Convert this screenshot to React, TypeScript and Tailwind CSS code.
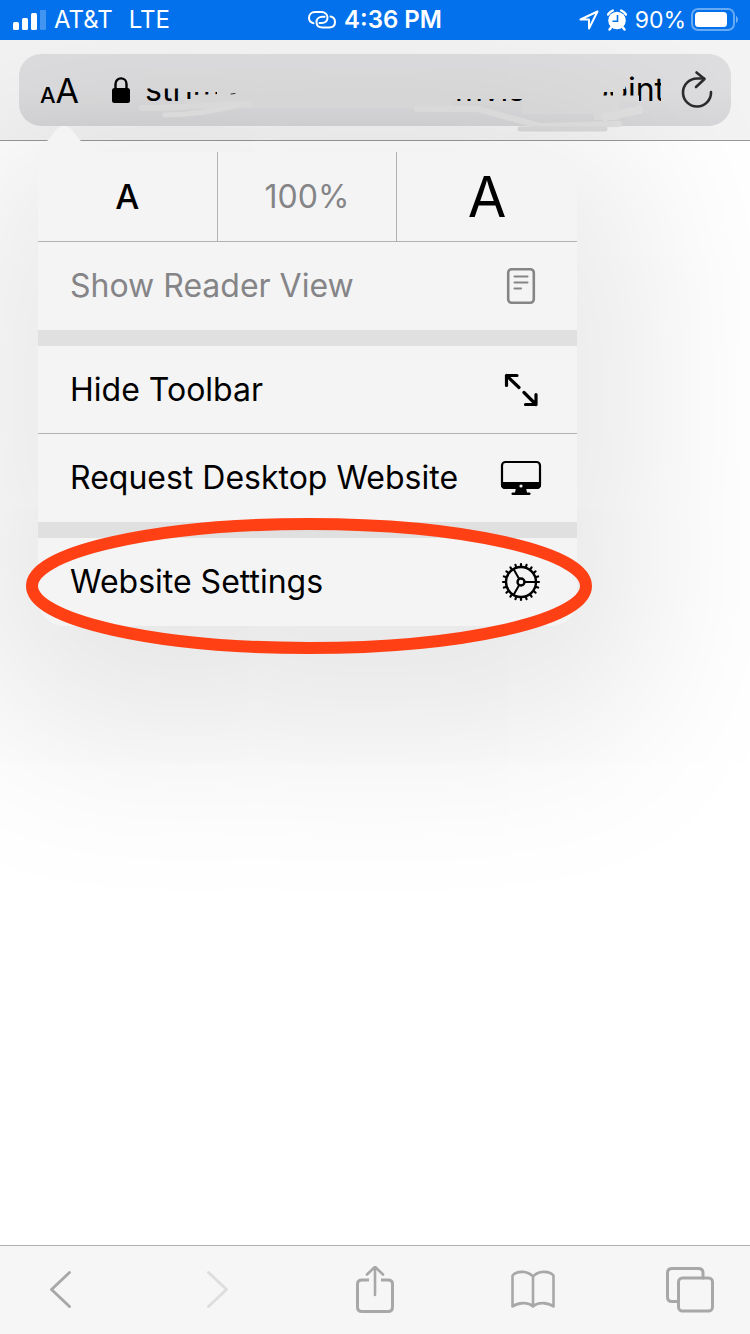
import type { ReactNode } from 'react';

function StatusBar() {
  return (
    <div className="relative z-10 grid h-10 grid-cols-[1fr_auto_1fr] items-center bg-[#0271eb] px-3 text-[24px] leading-10 text-white">
      <div className="flex items-center">
        <svg className="mr-2 h-5 w-[34px]" viewBox="0 0 34 20" fill="currentColor">
          <rect x="1" y="12" width="6" height="8" rx="1.5" />
          <rect x="10" y="8" width="6" height="12" rx="1.5" />
          <rect x="19" y="3" width="6" height="17" rx="1.5" />
          <rect x="28" y="-1" width="6" height="21" rx="1.5" opacity="0.25" />
        </svg>
        <span className="mr-4">AT&amp;T</span>
        <span>LTE</span>
      </div>
      <div className="flex items-center gap-2">
        <svg className="h-5 w-7" viewBox="0 0 28 20" fill="none" stroke="currentColor" strokeWidth="2" strokeLinecap="round">
          <path d="M5.5 13.2C2.500 12.500 1 10 1 7.800C1 4.500 3.500 2 7 2H13.500C17 2 19.500 4.500 19.500 7.500C19.500 11 17 13 13.500 13H11.500" />
          <path d="M22.500 6.500C25.500 7.200 27 9.500 27 12C27 15.500 24.500 17.500 21 17.500H14.500C11 17.500 8.500 15.500 8.500 12C8.500 9 11 6.800 14.500 6.800H16.500" />
        </svg>
        <span className="font-semibold">4:36 PM</span>
      </div>
      <div className="flex items-center justify-end text-[23px]">
        <svg className="mr-2 h-5 w-5" viewBox="0 0 20 20" fill="none" stroke="currentColor" strokeWidth="2" strokeLinejoin="round">
          <path d="M18.500 1.500L1.500 9.500H10V18.500Z" />
        </svg>
        <svg className="mr-2 h-[22px] w-5" viewBox="0 0 20 22">
          <circle cx="10" cy="11.500" r="8.800" fill="currentColor" />
          <path d="M1 5.500A13 13 0 0 1 5.800 1.500M19 5.500A13 13 0 0 0 14.200 1.500M4.500 18L2.500 20.500M15.500 18L17.500 20.500" stroke="currentColor" strokeWidth="2.400" strokeLinecap="round" fill="none" />
          <path d="M10.500 6V12.200H5.500" fill="none" stroke="#0271eb" strokeWidth="1.600" />
        </svg>
        <span className="mr-1">90%</span>
        <svg className="h-6 w-[48px]" viewBox="0 0 48 24">
          <rect x="2" y="1" width="42" height="21" rx="6" fill="none" stroke="#fff" strokeOpacity="0.4" strokeWidth="2" />
          <rect x="5" y="4" width="32" height="15" rx="3.500" fill="#fff" />
          <path d="M46 8C48.500 9 48.500 14 46 15Z" fill="#fff" fillOpacity="0.45" />
        </svg>
      </div>
    </div>
  );
}

// Marker strokes painted over most of the address
function Scribble() {
  return (
    <svg className="pointer-events-none absolute top-0 left-[120px] h-20 w-[530px]" viewBox="0 0 530 80" fill="none" strokeLinecap="round">
      <g fill="#dddddd">
        <path d="M4 14H312V54H78V38H45V34.500H4Z" />
        <path d="M46 45H54V41L80 40V54H46Z" />
        <path d="M300 14H486V35H482V38H460V60H383V45H300Z" />
        <path d="M455 41.500H500V47H480V66H455Z" />
        <path d="M474 34H482V47H474Z" />
      </g>
      <path d="M92 40L96 39.500" stroke="#333" strokeWidth="1" />
      <path d="M2 54C40 54 70 51 110 50" stroke="#e0e0e0" strokeWidth="6" />
      <path d="M26 61C50 61 70 58 96 52" stroke="#e2e2e2" strokeWidth="5" />
      <path d="M278 55H340L400 72L480 70" stroke="#e0e0e0" strokeWidth="6" />
      <path d="M466 63L500 56" stroke="#e0e0e0" strokeWidth="8" />
      <path d="M381 75H466" stroke="#dadada" strokeWidth="5" />
    </svg>
  );
}

function AddressBar() {
  return (
    <div className="border-b border-[#98989a] bg-[#f3f3f3] px-[19px] pt-[14px] pb-[14px]">
      <div className="relative flex h-[72px] items-center rounded-[22px] bg-linear-to-b from-[#dddddf] from-50% to-[#d6d6d8] pr-[18px] pl-[21px]">
        <button type="button" aria-label="Page settings" className="flex items-baseline text-black">
          <span className="text-[22px] font-medium">A</span>
          <span className="text-[34px]">A</span>
        </button>
        <svg className="ml-8 h-7 w-5" viewBox="0 0 20 28">
          <rect x="1" y="12" width="18" height="15" rx="2.500" />
          <path d="M4.500 13V8C4.500 0.500 15.500 0.500 15.500 8V13" fill="none" stroke="#000" strokeWidth="2.400" />
        </svg>
        <button type="button" aria-label="Address" className="ml-[14px] flex h-12 min-w-0 flex-1 items-center overflow-hidden text-[32px]">
          <span>strim</span>
          <span className="ml-auto">mvis</span>
          <span className="-mr-1 ml-16">point</span>
        </button>
        <button type="button" aria-label="Reload" className="ml-5 text-[#2c2c2e]">
          <svg className="h-10 w-8" viewBox="0 0 32 40" fill="none" stroke="currentColor" strokeWidth="2.600" strokeLinecap="round" strokeLinejoin="round">
            <path d="M30 22A14 14 0 1 1 16 8.500H23" />
            <path d="M15.500 2.500L23.500 9L15 17" />
          </svg>
        </button>
        <Scribble />
      </div>
    </div>
  );
}

interface MenuRowProps {
  label: string;
  icon: ReactNode;
  disabled?: boolean;
}

function MenuRow({ label, icon, disabled = false }: MenuRowProps) {
  return (
    <button
      type="button"
      disabled={disabled}
      className="flex h-[88px] w-full items-center justify-between px-8 text-[32px] text-black disabled:text-[#858587]"
    >
      <span>{label}</span>
      {icon}
    </button>
  );
}

const teeth = Array.from({ length: 20 }, (_, i) => i * 18);

const readerIcon = (
  <svg className="h-12 w-12" viewBox="0 0 48 48" fill="none" stroke="currentColor" strokeLinecap="round">
    <rect x="11.200" y="7.200" width="25.600" height="33.600" rx="3.500" strokeWidth="2.600" />
    <path d="M17.500 14.500H30.500M17.500 20.500H30.500M17.500 26.500H24" strokeWidth="2" />
  </svg>
);

const expandIcon = (
  <svg className="h-12 w-12" viewBox="0 0 48 48" fill="none" stroke="currentColor" strokeWidth="3.200" strokeLinecap="round" strokeLinejoin="round">
    <path d="M9.500 19.500V9.500H20M9.500 9.500L22 21.500M39 28.500V38.500H28.500M39 38.500L27 26.500" />
  </svg>
);

const desktopIcon = (
  <svg className="h-12 w-12" viewBox="0 0 48 48">
    <rect x="5" y="8" width="38" height="26" rx="3.500" fill="none" stroke="currentColor" strokeWidth="2.200" />
    <path d="M4 28H44V31C44 33.500 42.500 35 40 35H8C5.500 35 4 33.500 4 31Z" />
    <path d="M19 34H29L30 38.500H32.500C34 38.500 34 41 32.500 41H15.500C14 41 14 38.500 15.500 38.500H18Z" />
    <circle cx="24" cy="32" r="1.600" fill="#f4f4f5" />
  </svg>
);

const gearIcon = (
  <svg className="h-12 w-12" viewBox="0 0 48 48" fill="none" stroke="currentColor" strokeWidth="2.400">
    <circle cx="24" cy="24" r="15" />
    <circle cx="24" cy="24" r="3.500" />
    <path d="M27.500 24H39M22.200 21L16.500 11M22.200 27L16.500 37" strokeWidth="2" />
    {teeth.map((angle) => (
      <path key={angle} d="M40 24H42" strokeWidth="2.200" strokeLinecap="round" transform={`rotate(${angle} 24 24)`} />
    ))}
  </svg>
);

function PageMenu() {
  return (
    <div className="relative mt-[11px] ml-[38px] w-[539px] max-w-[calc(100%-38px)] rounded-[26px] rounded-tl-none bg-[#f4f4f5] shadow-[0_50px_180px_60px_rgba(0,0,0,0.1)]">
      <svg className="absolute -top-[26px] left-0 h-[27px] w-[60px]" viewBox="0 0 60 27" fill="#f4f4f5">
        <path d="M0 27C2 24 5 20 10 14L18 4C22 -1.500 30 -1.500 34 4L42 14C48 22 51 26 60 26V27Z" />
      </svg>
      <div className="grid h-[90px] grid-cols-3 divide-x divide-[#b2b2b4] border-b border-[#b2b2b4]">
        <button type="button" aria-label="Smaller text" className="text-[34px] font-medium">A</button>
        <button type="button" className="text-[32px] text-[#858587]">100%</button>
        <button type="button" aria-label="Larger text" className="text-[56px] leading-none">A</button>
      </div>
      <MenuRow label="Show Reader View" icon={readerIcon} disabled />
      <div className="h-4 bg-[#e0e0e0]" />
      <div className="divide-y divide-[#b2b2b4]">
        <MenuRow label="Hide Toolbar" icon={expandIcon} />
        <MenuRow label="Request Desktop Website" icon={desktopIcon} />
      </div>
      <div className="h-4 bg-[#e0e0e0]" />
      <div className="relative">
        <MenuRow label="Website Settings" icon={gearIcon} />
        <svg className="pointer-events-none absolute -top-5 -left-3 h-[136px] w-[566px]" viewBox="0 0 566 136" fill="none">
          <ellipse cx="283" cy="68" rx="277" ry="62" stroke="#ff4015" strokeWidth="12" />
        </svg>
      </div>
    </div>
  );
}

interface ToolButtonProps {
  label: string;
  children: ReactNode;
  disabled?: boolean;
}

function ToolButton({ label, children, disabled = false }: ToolButtonProps) {
  return (
    <button type="button" aria-label={label} disabled={disabled} className="text-[#a8a8a8] disabled:text-[#dedede]">
      <svg className="h-12 w-12" viewBox="0 0 48 48" fill="none" stroke="currentColor" strokeWidth="3" strokeLinecap="round" strokeLinejoin="round">
        {children}
      </svg>
    </button>
  );
}

function Toolbar() {
  return (
    <div className="relative z-10 flex h-[89px] items-center justify-between border-t border-[#b0b0b0] bg-[#f6f6f6] px-9">
      <ToolButton label="Back">
        <path d="M33.500 6.500L15.500 23.500L33.500 40.500" />
      </ToolButton>
      <ToolButton label="Forward" disabled>
        <path d="M14.500 6.500L32.500 23.500L14.500 40.500" />
      </ToolButton>
      <ToolButton label="Share">
        <path d="M18 14H11C8 14 6.500 15.500 6.500 18V41C6.500 44 8 45.500 11 45.500H37C40 45.500 41.500 44 41.500 41V18C41.500 15.500 40 14 37 14H30" strokeLinecap="butt" />
        <path d="M24 29V1.500M16 8.500L24 0.800L32 8.500" strokeWidth="2.600" />
      </ToolButton>
      <ToolButton label="Bookmarks">
        <path d="M24 10.500C19 4.500 8 4.500 3.500 9.500V40.500C9 36.500 19 35.500 24 40.500C29 35.500 39 36.500 44.500 40.500V9.500C40 4.500 29 4.500 24 10.500V40.500" strokeWidth="2.600" />
      </ToolButton>
      <ToolButton label="Tabs">
        <rect x="12.500" y="12" width="34" height="33" rx="4" />
        <path d="M37 12V7C37 4 35.500 2.500 32.500 2.500H6C3 2.500 1.500 4 1.500 7V31C1.500 34 3 35.500 6 35.500H12" />
      </ToolButton>
    </div>
  );
}

export default function App() {
  return (
    <div className="flex min-h-screen flex-col overflow-hidden bg-white font-['Inter','Liberation_Sans',sans-serif]">
      <StatusBar />
      <AddressBar />
      <main className="relative flex-1">
        <PageMenu />
      </main>
      <Toolbar />
    </div>
  );
}
